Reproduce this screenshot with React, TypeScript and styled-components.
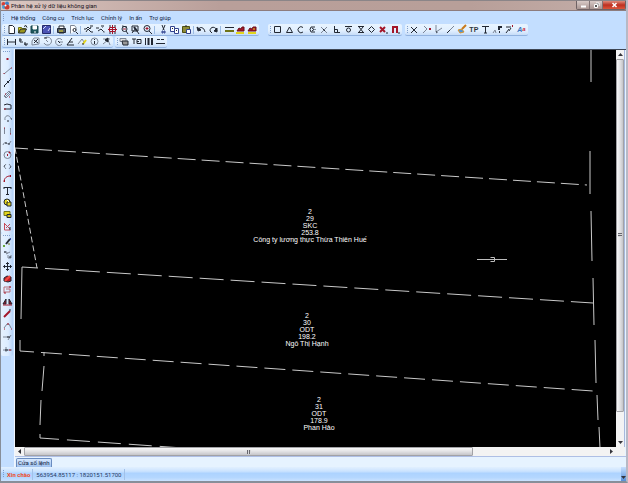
import React from "react";
import styled, { createGlobalStyle } from "styled-components";

const GlobalStyle = createGlobalStyle`
  * { box-sizing: border-box; }
  html, body, #root { height: 100%; margin: 0; }
  body { overflow: hidden; font: 6px/10px Roboto, "Noto Sans", sans-serif; color: #101c3f; }
  button { padding: 0; margin: 0; border: 0; background: none; font: inherit; color: inherit; }
`;

type Stroke = [d: string, color?: string, fill?: string, width?: number];
type Icon = { label: string; art: Stroke[] };

const K = "#222833";
const G = "#7c8696";
const R = "#a3162a";
const Y = "#e3d51c";
const O = "#707417";

const icon = (label: string, ...art: Stroke[]): Icon => ({ label, art });

const fileTools: (Icon | null)[] = [
  icon("Tạo mới", ["M3 1.5h3.5l2 2v6H3z", K, "#fff"]),
  icon("Mở", ["M1.5 9V3.500h3l1 1h3v1", O, Y], ["M1.500 9l2-4h6l-2 4z", K, "#9a961e"], ["M7 2.500l2-1 1 2", K]),
  icon("Lưu", ["M2 2h7v7H2z", "#17454c", "#1d565c"], ["M4 2h3.500v3H4z", "#fff", "#fff"], ["M5 8h2", "#fff"]),
  icon("Dữ liệu bản đồ", ["M1.500 1.500h8v8h-8z", "#242a6b", "#4c54b4"], ["M5 2l-3 3M7 7l2-3", "#d8dcff"]),
  null,
  icon("In", ["M3 4V2h5v2", K, "#fff"], ["M1.500 4.500h8v4h-8z", K, "#555d66"], ["M3 7h4", Y], ["M3 9h5", K]),
  icon("Xem trước khi in", ["M2.500 9.500v-8h4l1.500 2v3", G, "#fff"], ["M5 6a1.500 1.500 0 1 0 3 0a1.500 1.500 0 1 0-3 0M8 8l2 2", K]),
  null,
  icon("Dịch bản đồ", ["M1 5h2l2-2 2 2 1-2M3 8l2-3 3 3", K], ["M7 2h3M8 8h2", K]),
  icon("Chọn vùng", ["M1 4h3M6 2h3M3 7l3-2 3 3", K], ["M7 4l2-2M8 8h2", G]),
  icon("Xem toàn bộ", ["M2 2h2M7 2h2M2 9h2M7 9h2", K], ["M5.500 1v9M1 5.500h9M2.500 3.500h6v4h-6z", R]),
  icon("Xem trước", ["M3 5a2.500 2.500 0 1 0 5 0a2.500 2.500 0 1 0-5 0M7 7l2 3M3 2l5 1", K], ["M4 5h3", R]),
  icon("Thu nhỏ", ["M2 2h6v5H2zM7 7l2 3M2 9l4-5", K], ["M4 3l3 4", K, "none", 2]),
  icon("Phóng to", ["M2 4.500a3 3 0 1 0 6 0a3 3 0 1 0-6 0M7 7l3 3", K], ["M3.500 4.500h3M5 3v3", R]),
  null,
  icon("Cắt", ["M4 1l2 5M7 1l-2 5", K], ["M4 7h1v2H4zM6 7h1v2H6z", "#33448f"]),
  icon("Sao chép", ["M1.500 2.500h4v5h-4z", "#33448f", "#fff"], ["M5.500 4.500h4v5h-4z", "#33448f", "#fff"], ["M7 6.500h1M3 4.500h1", K]),
  icon("Dán", ["M1.500 2.500h7v6h-7z", "#4e5012", "#8e8b37"], ["M5.500 5.500h4v4h-4z", "#33448f", "#fff"], ["M4 2h2", K]),
  null,
  icon("Hoàn tác", ["M2 6c2-4 6-3 7 2", K], ["M1 3l1 4 3-1z", K, K]),
  icon("Làm lại", ["M9 7c-1-5-7-5-7 0l2 2", K], ["M9 4v4L6 7z", K, K]),
  null,
  icon("Lớp", ["M1 3.500h9", K], ["M1 7h9", O, "none", 2]),
  icon("Thửa đất", ["M2 7l2-3 2 1 1-2h2v4z", "#6c1118", "#a3162a"], ["M1 9h8", Y, "none", 2]),
  icon("Ghép thửa", ["M1 7l2-3 2 1 1-2h3v4z", "#6c1118", "#a3162a"], ["M1 9h8", Y, "none", 2], ["M6 5h2", Y]),
];

const snapTools: Icon[] = [
  icon("Điểm cuối", ["M2.500 2.500h6v6h-6z", K]),
  icon("Trung điểm", ["M2.500 8.500h6L5.500 3z", K]),
  icon("Tâm", ["M8 3.500a3 3 0 1 0 0 4.500", K]),
  icon("Nút", ["M8 3H4L3 5.500 4 8h4M5 4l2 1.500L5 7M8 5v1", K]),
  icon("Giao điểm", ["M2 3l6 6M8 3L2 9", G], ["M4 5l2 2", K]),
  icon("Vuông góc", ["M3.500 2v6.500H9M3.500 5.500h3v3", K]),
  icon("Tiếp tuyến", ["M2 2.500h7M3.500 6a2 2 0 1 0 4 0a2 2 0 1 0-4 0", K]),
  icon("Gần nhất", ["M3 2.500h6M3 8.500h6M4 3l2 2.500L4 8M8 3L6 5.500 8 8", K]),
  icon("Góc phần tư", ["M5.500 2.500l3 3-3 3-3-3z", K]),
  icon("Bỏ bắt điểm", ["M2 3l5 5M7 3L2 8", R, "none", 2], ["M8 9h2", K]),
  icon("Bắt điểm", ["M3 9V3h4v6", R, "none", 2], ["M8 9h2", K]),
];

const drawTools: Icon[] = [
  icon("Xóa điểm", ["M2 3l6 6M8 3L2 9", K]),
  icon("Thêm điểm", ["M3 2l3 3-4 4", G], ["M8 5h2", R, "none", 2]),
  icon("Góc", ["M3 1v7l6-4M3 9l2-1", G], ["M3 8h1", K]),
  icon("Đoạn", ["M2 9l7-7", G], ["M2 9l3-3", K]),
  icon("Tô màu", ["M6 5l4-4", "#c87a1b", "none", 2], ["M2 6l4-1 2 3-4 1z", "#db942b", "#4d94d8"]),
];

const textTools: Icon[] = [
  icon("Chữ", ["M2 2.500h7M5.500 2.500V9M4 9h3", K]),
  icon("Sửa chữ", ["M7 2v4M7 8h1M9 2v2M7 3h2", K, "none", 2], ["M1 9l2-3 1 3", G]),
  icon("Xoay chữ", ["M2 3h5M5 5L2 9M7 4L5 7", K], ["M8 2h1", R, "none", 2]),
];

const measureTools: Icon[] = [
  icon("Khoảng cách", ["M1.500 3v6M9.500 3v6M2 6h7", K]),
  icon("Điểm tọa độ", ["M2 2v4h3M7 6v3h2", K], ["M1 4h3M6 8h4", K]),
  icon("Diện tích", ["M2 9V5l2-3h5v6z", G], ["M4 4l4 3M4 7l4-4", K]),
  icon("Góc quay", ["M3 2a4 4 0 1 1-1 5M4 4l2 2", G], ["M2 2h3", K]),
  icon("Phương vị", ["M9 4a3.500 3.500 0 1 0 0 4M6 6h4", G], ["M5 5l2 2", K]),
  icon("Tam giác", ["M2 9l5-7M2 9h7M4 6h4", K]),
  icon("Đo nhanh", ["M1 8l4-5 2 3", G], ["M6 8l3-4", Y, "none", 2], ["M5 8h2", K]),
  icon("Thông tin", ["M2 5.500a3.500 3.500 0 1 0 7 0a3.500 3.500 0 1 0-7 0", G], ["M5.500 3v1M5.500 5v3", K]),
  icon("Hướng tuyến", ["M2 3h7M2 8l5-4 2 5", G], ["M4 4l3-2v4z", K, K]),
];

const lineTools: Icon[] = [
  icon("Danh sách lớp", ["M1 2.500h6v3H1z", G, "#ddd"], ["M3 5h6v4H4z", K, "#999"]),
  icon("Kiểu chữ", ["M1 3h4M3 3v5M6 3.500h4v4H6zM6 5.500h2", K]),
  icon("Độ rộng nét", ["M2.500 2v7", K, "none", 1], ["M5.500 2v7M9 2v7", K, "none", 2]),
  icon("Kiểu nét", ["M2 3.500h3M6 3.500h3M1 7.500h9", K]),
];

const sketchTools: Icon[] = [
  icon("Điểm", ["M4.500 6h2", R, "none", 2]),
  icon("Đường thẳng", ["M2 9l7-6", G], ["M2 8v1M9 3h1", R]),
  icon("Tuyến", ["M2 9l3-3 1-1 3-3", K], ["M2 9h1M5 5h2M8 2h1", K, "none", 2]),
  icon("Đường song song", ["M2 7l5-5 2 2-5 5zM3 8l5-5", G], ["M3 5h1M7 8h1", R]),
  icon("Đường gấp khúc", ["M2 4l3-1 4 1v4H2", K], ["M2 8h2", R]),
  icon("Cung tròn", ["M3 7c-1-5 5-6 6-1", G], ["M5 8h2M9 6h1", K]),
  icon("Chữ nhật", ["M2.500 3v6M8.500 3v6", G], ["M2 3h1M8 9h1", R]),
  icon("Đường cong", ["M1 8c2-6 5 3 8-4", G], ["M3 6h2M6 7h2", K]),
  icon("Đường tròn", ["M2 6a3.500 3.500 0 1 0 7 0a3.500 3.500 0 1 0-7 0", G], ["M5 6h1M7 4l1-1", R, "none", 2]),
  icon("Đa giác", ["M4 3L2 5.500 4 8M7 3l2 2.500L7 8", G], ["M2 5h1M8 6h1", K]),
  icon("Cung ba điểm", ["M2 9c0-4 3-6 6-6", R], ["M2 8h1M8 3h1", R, "none", 2]),
  icon("Viết chữ", ["M2 2.500h7M5.500 2.500v7M4 9.500h3M2 2v2M9 2v2", K]),
  icon("Tạo vùng", ["M2 5a3 3 0 1 0 6 0a3 3 0 1 0-6 0", K, Y], ["M5 5h4v4H5z", K, Y], ["M5 3l2 2", "#fff"]),
  icon("Chọn thửa", ["M2 2.500h6v4H2z", O, Y], ["M5 5.500h4v3H5z", K, "#d0c01c"]),
  icon("Chia thửa", ["M2.500 2v7h6M3 3l5 5M4 7l4-4", "#c64b5b"], ["M8 6v3", K]),
];

const editTools: Icon[] = [
  icon("Sửa", ["M4 7l4-5", K, "none", 2], ["M1 9h2", "#66a83b", "none", 2], ["M6 7h2", O], ["M8 2h1", "#3b51a8", "none", 2]),
  icon("Nhân bản", ["M2 3h3v2M4 5l4-2M6 6v3h3V6", G], ["M2 3h2M7 8h2", K]),
  icon("Di chuyển", ["M5.500 1.500v8M1.500 5.500h8M4 3l1.500-1.500L7 3M4 8l1.500 1.500L7 8M3 4L1.500 5.500 3 7M8 4l1.500 1.500L8 7", K]),
  icon("Xóa", ["M2 5l3-2 4 1v4L6 9 2 8z", K, "#c21b27"], ["M3 8l5-5", "#f24c42", "none", 2]),
  icon("Tỷ lệ", ["M2 3h7M2 3v6M2 8h6V5H4", "#b66c78"], ["M2 9h2M7 3h2", R]),
  icon("Đối xứng", ["M1 8l3-5v5zM10 8L7 3v5z", K, R], ["M1 9h9", R]),
  icon("Xoay", ["M2 9l6-6", R, "none", 2], ["M7 2h2", K]),
  icon("Nối", ["M2 8l3-4h2l2 4", G], ["M5 4h2M2 9h1M9 9h1", R]),
  icon("Cắt đoạn", ["M1 5h6M9 3L6 8", G], ["M5 5h3", K]),
  icon("Kéo dài", ["M1 6h9M4 3v5", G], ["M3 6h3", K], ["M7 6h2", R]),
];

const Window = styled.main`
  display: flex;
  flex-direction: column;
  height: 100vh;
  background: #c3deff;
  border: 1px solid #878e99;
  border-width: 0 2px 2px 1px;
  border-right-color: #b7b9c5;
`;
const TitleBar = styled.header`
  display: flex;
  align-items: center;
  gap: 1px;
  flex: 0 0 11px;
  border-top: 1px solid #8b8588;
  border-bottom: 1px solid #8d7c7d;
  background: linear-gradient(90deg, #dcc7c1, #b99f9a 35%, #b89f99 75%, #c4aea9);
`;
const Title = styled.h1`
  flex: 1;
  margin: 0;
  font: inherit;
  line-height: 9px;
  color: #15101a;
`;
const WindowButtons = styled.div`
  display: flex;
  align-self: flex-start;
  border: 1px solid #6f6264;
  border-top: 0;
  border-radius: 0 0 2px 2px;
`;
const WindowButton = styled.button<{ $close?: boolean }>`
  display: grid;
  place-items: center;
  width: ${(p) => (p.$close ? 22 : 13)}px;
  height: 8px;
  border-right: ${(p) => (p.$close ? 0 : 1)}px solid #817374;
  background: ${(p) => (p.$close ? "linear-gradient(#df8b7b, #bd2f20 50%, #dc553b)" : "linear-gradient(#d8cac7, #a99592)")};
`;
const MenuBar = styled.nav`
  display: flex;
  align-items: center;
  gap: 7px;
  flex: 0 0 13px;
  padding-left: 2px;
`;
const MenuButton = styled.button`
  line-height: 12px;
  white-space: nowrap;
`;
const Grip = styled.span<{ $across?: boolean }>`
  flex: none;
  width: ${(p) => (p.$across ? 8 : 1)}px;
  height: ${(p) => (p.$across ? 1 : 8)}px;
  background: repeating-linear-gradient(${(p) => (p.$across ? "90deg" : "180deg")}, #7f9dca 0 1px, transparent 1px 2px);
`;
const ToolRow = styled.div`
  display: flex;
  flex: 0 0 12px;
  padding-left: 1px;
`;
const Toolbar = styled.div<{ $width: number; $before?: number }>`
  display: flex;
  align-items: center;
  justify-content: space-between;
  flex: 0 0 ${(p) => p.$width}px;
  height: 12px;
  margin-left: ${(p) => p.$before ?? 0}px;
  padding: 0 1px 0 2px;
  border-bottom: 1px solid #91b2df;
  border-radius: 2px;
  background: linear-gradient(#e8f4ff, #e1effe 60%, #c6dcf8);
`;
const Separator = styled.span`
  width: 3px;
  height: 8px;
  border-left: 1px solid #9bbbe3;
`;
const ToolButton = styled.button`
  display: grid;
  place-items: center;
  flex: none;
  width: 11px;
  height: 11px;
`;
const LetterButton = styled(ToolButton)<{ $blue?: boolean }>`
  font: ${(p) => (p.$blue ? "italic bold" : "bold")} 7px/11px "Liberation Sans", sans-serif;
  color: ${(p) => (p.$blue ? "#3973bd" : "#303641")};
`;
const RedLetter = styled.span`
  font-size: 6px;
  color: #cf3142;
`;
const LetterPair = styled.span`
  display: flex;
`;
const Workspace = styled.div`
  display: flex;
  flex: 1;
  min-height: 0;
  margin-top: 1px;
`;
const SideColumn = styled.aside`
  flex: 0 0 14px;
  border-right: 1px solid #f1f7ff;
`;
const Palette = styled.div<{ $height: number }>`
  display: flex;
  flex-direction: column;
  align-items: center;
  justify-content: space-between;
  width: 12px;
  height: ${(p) => p.$height}px;
  padding: 2px 0 1px;
  border-radius: 2px;
  background: linear-gradient(90deg, #e6f2ff, #dcecff 60%, #b3d1f7);
`;
const MainColumn = styled.div`
  display: flex;
  flex-direction: column;
  flex: 1;
  min-width: 0;
  background: #e6f3ff;
`;
const ViewGrid = styled.section`
  display: grid;
  grid-template: minmax(0, 1fr) 9px / minmax(0, 1fr) 9px;
  flex: 1;
  min-height: 0;
  padding-right: 1px;
  border-bottom: 1px solid #aebfe5;
  border-top: 1px solid #3d4654;
`;
const MapView = styled.div`
  position: relative;
  overflow: hidden;
  background: #000;
`;
const MapDrawing = styled.svg`
  display: block;
  width: 100%;
  height: 100%;
`;
const ParcelLabel = styled.div<{ $x: number; $y: number }>`
  position: absolute;
  left: ${(p) => p.$x}px;
  top: ${(p) => p.$y}px;
  display: flex;
  flex-direction: column;
  align-items: center;
  justify-content: space-between;
  height: 33px;
  transform: translateX(-50%);
  font: 7px/7px "Liberation Sans", sans-serif;
  color: #fff;
  white-space: nowrap;
`;
const ScrollBar = styled.div<{ $vertical?: boolean }>`
  display: flex;
  flex-direction: ${(p) => (p.$vertical ? "column" : "row")};
  grid-column: ${(p) => (p.$vertical ? "2" : "1 / 3")};
  background: #f3f3f3;
  border-right: ${(p) => (p.$vertical ? "1px solid #a7b8dc" : "0")};
`;
const ScrollButton = styled.button`
  display: grid;
  place-items: center;
  flex: 0 0 9px;
  min-width: 8px;
`;
const Thumb = styled.div<{ $vertical?: boolean; $share: number }>`
  display: grid;
  place-items: center;
  flex: ${(p) => p.$share} 0 0;
  border: 1px solid #a2a2a6;
  border-radius: 1px;
  background: linear-gradient(${(p) => (p.$vertical ? "90deg" : "180deg")}, #f8f8f8, #e4e4e6 45%, #c5c5c9);
`;
const ThumbGrip = styled.span<{ $vertical?: boolean }>`
  width: 4px;
  height: 4px;
  background: repeating-linear-gradient(${(p) => (p.$vertical ? "180deg" : "90deg")}, #66666c 0 1px, #d8d8da 1px 2px);
`;
const Track = styled.div<{ $share: number }>`
  flex: ${(p) => p.$share} 0 0;
`;
const TabStrip = styled.div`
  display: flex;
  align-items: flex-end;
  flex: 0 0 10px;
`;
const CommandTab = styled.button`
  height: 9px;
  margin-left: 1px;
  padding: 0 1px;
  border: 1px solid #6a8cc0;
  border-bottom: 0;
  border-radius: 2px 2px 0 0;
  background: linear-gradient(#d8e9ff, #9fc1ee);
  line-height: 8px;
  white-space: nowrap;
`;
const StatusBar = styled.footer`
  display: flex;
  align-items: center;
  flex: 0 0 14px;
  padding-left: 2px;
  background: linear-gradient(#e1f0ff, #cbe3ff 30%, #add3ff 45%, #b4d7ff 75%, #cae2ff);
`;
const StatusText = styled.span<{ $accent?: boolean }>`
  padding: 0 2px 0 3px;
  border-right: 1px solid #a2c1e8;
  line-height: 11px;
  white-space: nowrap;
  color: ${(p) => (p.$accent ? "#f04a21" : "#263964")};
  font-weight: ${(p) => (p.$accent ? 700 : 400)};
`;
const StatusMenu = styled.button`
  display: grid;
  place-items: end center;
  width: 5px;
  height: 14px;
  margin-left: auto;
  background: linear-gradient(#c6dfff, #5790d8);
`;

function Glyph({ art }: { art: Stroke[] }) {
  return (
    <svg width="11" height="11" viewBox="0 0 11 11" aria-hidden="true">
      {art.map(([d, color = K, fill = "none", width = 1], i) => (
        <path key={i} d={d} stroke={color} fill={fill} strokeWidth={width} />
      ))}
    </svg>
  );
}

function Tools({ items }: { items: (Icon | null)[] }) {
  return (
    <>
      {items.map((item, i) =>
        item ? (
          <ToolButton key={i} type="button" aria-label={item.label}>
            <Glyph art={item.art} />
          </ToolButton>
        ) : (
          <Separator key={i} />
        )
      )}
    </>
  );
}

function Arrow({ d }: { d: string }) {
  return (
    <svg width="5" height="5" viewBox="0 0 5 5" aria-hidden="true">
      <path d={d} fill="#34343b" />
    </svg>
  );
}

const menus = ["Hệ thống", "Công cụ", "Trích lục", "Chỉnh lý", "In ấn", "Trợ giúp"];

const parcels = [
  { x: 295, y: 158, lines: ["2", "29", "SKC", "253.8", "Công ty lương thực Thừa Thiên Huế"] },
  { x: 292, y: 262, lines: ["2", "30", "ODT", "198.2", "Ngô Thị Hạnh"] },
  { x: 304, y: 346, lines: ["2", "31", "ODT", "178.9", "Phan Hảo"] },
];

const boundaries: { d: string; dash?: string; offset?: number }[] = [
  { d: "M0 98L572 135", dash: "18 6", offset: 5 },
  { d: "M0 98L22 218", dash: "6 3" },
  { d: "M7 217L578 253", dash: "24 7", offset: 8 },
  { d: "M5 301L578 341", dash: "21 7", offset: 7 },
  { d: "M25 388L168 398", dash: "23 8", offset: 4 },
  { d: "M7 217L6 269M5 290V301" },
  { d: "M29 302V306M29 316L27 341M26 350L25 375M25 384V388" },
  { d: "M576 0V32M575 101V144M576 161L577 211M578 228L579 275M580 290L581 333M582 345L583 370M584 377L585 398" },
];

export default function App() {
  return (
    <>
      <GlobalStyle />
      <Window>
        <TitleBar>
          <svg width="9" height="9" viewBox="0 0 9 9" aria-hidden="true">
            <circle cx="2.500" cy="3" r="2" fill="#d44038" />
            <circle cx="6" cy="2.500" r="2" fill="#3c83cc" />
            <circle cx="3" cy="6" r="2" fill="#4a9dd6" />
            <circle cx="6" cy="6" r="2.500" fill="#ce392f" />
            <circle cx="4.500" cy="4.500" r="1" fill="#fff" />
          </svg>
          <Title>Phân hệ xử lý dữ liệu không gian</Title>
          <WindowButtons>
            <WindowButton type="button" aria-label="Thu nhỏ cửa sổ">
              <svg width="7" height="5" viewBox="0 0 7 5"><path d="M1 3.500h5" stroke="#fff" strokeWidth="2" /></svg>
            </WindowButton>
            <WindowButton type="button" aria-label="Khôi phục cửa sổ">
              <svg width="7" height="6" viewBox="0 0 7 6"><path d="M3 1h3v3M1.500 2.500h3v3h-3z" stroke="#fff" fill="#555" /></svg>
            </WindowButton>
            <WindowButton type="button" aria-label="Đóng" $close>
              <svg width="7" height="6" viewBox="0 0 7 6"><path d="M1.500 1l4 4M5.500 1l-4 4" stroke="#fff" strokeWidth="1.500" /></svg>
            </WindowButton>
          </WindowButtons>
        </TitleBar>
        <MenuBar>
          <Grip />
          {menus.map((name) => (
            <MenuButton key={name} type="button">{name}</MenuButton>
          ))}
        </MenuBar>
        <ToolRow>
          <Toolbar $width={257}>
            <Grip />
            <Tools items={fileTools} />
          </Toolbar>
          <Toolbar $width={134} $before={9}>
            <Grip />
            <Tools items={snapTools} />
          </Toolbar>
          <Toolbar $width={123} $before={3}>
            <Grip />
            <Tools items={drawTools} />
            <LetterButton type="button">TP</LetterButton>
            <Tools items={textTools} />
            <LetterButton type="button" $blue>
              <LetterPair>A<RedLetter>a</RedLetter></LetterPair>
            </LetterButton>
          </Toolbar>
        </ToolRow>
        <ToolRow>
          <Toolbar $width={111}>
            <Grip />
            <Tools items={measureTools} />
          </Toolbar>
          <Toolbar $width={52} $before={2}>
            <Grip />
            <Tools items={lineTools} />
          </Toolbar>
        </ToolRow>
        <Workspace>
          <SideColumn>
            <Palette $height={184}>
              <Grip $across />
              <Tools items={sketchTools} />
            </Palette>
            <Palette $height={123}>
              <Grip $across />
              <Tools items={editTools} />
            </Palette>
          </SideColumn>
          <MainColumn>
            <ViewGrid>
              <MapView>
                <MapDrawing aria-label="Bản đồ thửa đất">
                  {boundaries.map((b, i) => (
                    <path key={i} d={b.d} fill="none" stroke="#c9c9c9" strokeDasharray={b.dash} strokeDashoffset={b.offset} />
                  ))}
                  <path d="M462 209.500h30" stroke="#bdbdbd" />
                  <path d="M475.500 207.500h4v4h-4" stroke="#bdbdbd" fill="none" />
                </MapDrawing>
                {parcels.map((p) => (
                  <ParcelLabel key={p.lines[1]} $x={p.x} $y={p.y}>
                    {p.lines.map((line) => <span key={line}>{line}</span>)}
                  </ParcelLabel>
                ))}
              </MapView>
              <ScrollBar $vertical>
                <ScrollButton type="button" aria-label="Cuộn lên"><Arrow d="M0 4h5L2.500 1z" /></ScrollButton>
                <Thumb $vertical $share={93}><ThumbGrip $vertical /></Thumb>
                <Track $share={7} />
                <ScrollButton type="button" aria-label="Cuộn xuống"><Arrow d="M0 1h5L2.500 4z" /></ScrollButton>
              </ScrollBar>
              <ScrollBar>
                <ScrollButton type="button" aria-label="Cuộn trái"><Arrow d="M4 0v5L1 2.500z" /></ScrollButton>
                <Thumb $share={77}><ThumbGrip /></Thumb>
                <Track $share={23} />
                <ScrollButton type="button" aria-label="Cuộn phải"><Arrow d="M1 0v5l3-2.500z" /></ScrollButton>
                <ScrollButton as="span" />
              </ScrollBar>
            </ViewGrid>
            <TabStrip>
              <CommandTab type="button">Cửa sổ lệnh</CommandTab>
            </TabStrip>
          </MainColumn>
        </Workspace>
        <StatusBar>
          <Grip />
          <StatusText $accent>Xin chào</StatusText>
          <StatusText>563954.85117 : 1820151.51700</StatusText>
          <StatusMenu type="button" aria-label="Tùy chọn thanh trạng thái"><Arrow d="M0 0h5L2.500 3z" /></StatusMenu>
        </StatusBar>
      </Window>
    </>
  );
}
